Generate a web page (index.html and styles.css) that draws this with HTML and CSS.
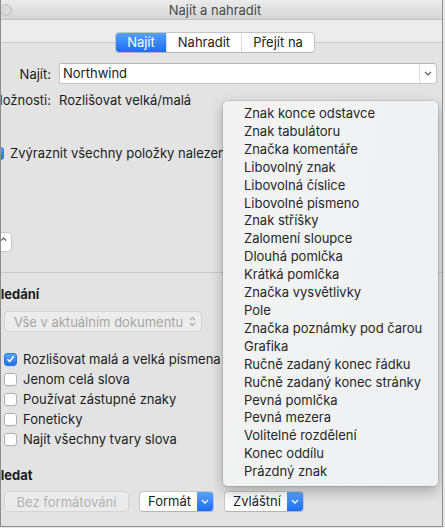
FILE: index.html
```html
<!DOCTYPE html>
<html lang="cs">

<head>
    <meta charset="UTF-8">
    <meta name="viewport" content="width=device-width, initial-scale=1.0">
    <title>Najít a nahradit</title>
    <link rel="stylesheet" href="styles.css">
</head>

<body>
    <div class="window">
        <div class="dialog">
            <div class="titlebar">
                <span class="traffic"><span class="close-btn"></span></span>
                <span class="title">Najít a nahradit</span>
                <span></span>
            </div>

            <div class="toolbar">
                <div class="segmented">
                    <span class="seg active">Najít</span>
                    <span class="seg">Nahradit</span>
                    <span class="seg">Přejít na</span>
                </div>
            </div>

            <div class="content">
                <div class="field-row">
                    <span class="row-label">Najít:</span>
                    <div class="combo">
                        <span class="combo-text">Northwind</span>
                        <span class="combo-arrow">
                            <svg width="8" height="5" viewBox="0 0 8 5"><path d="M1 1l3 3 3-3" fill="none" stroke="#606060" stroke-width="1.2"/></svg>
                        </span>
                    </div>
                </div>

                <div class="options-row">
                    <span class="row-label">Možnosti:</span>
                    <span class="row-value">Rozlišovat velká/malá</span>
                </div>

                <div class="check highlight">
                    <span class="box checked">
                        <svg width="9" height="8" viewBox="0 0 9 8"><path d="M1.5 4.2l2.2 2.3 4-5.2" fill="none" stroke="#fff" stroke-width="1.6"/></svg>
                    </span>
                    Zvýraznit všechny položky nalezené v:
                </div>

                <button class="collapse">
                    <svg width="7" height="4" viewBox="0 0 7 4"><path d="M1 3.5l2.5-2.5 2.5 2.5" fill="none" stroke="#555" stroke-width="1.1"/></svg>
                </button>

                <div class="divider"></div>

                <div class="section-title">Hledání</div>
                <div class="indent">
                    <div class="select disabled">
                        <span>Vše v aktuálním dokumentu</span>
                        <svg width="7" height="11" viewBox="0 0 7 11"><path d="M1 4l2.5-2.5L6 4M1 7l2.5 2.5L6 7" fill="none" stroke="#a8a8a8" stroke-width="1.1"/></svg>
                    </div>

                    <div class="checks">
                        <div class="check">
                            <span class="box checked">
                                <svg width="9" height="8" viewBox="0 0 9 8"><path d="M1.5 4.2l2.2 2.3 4-5.2" fill="none" stroke="#fff" stroke-width="1.6"/></svg>
                            </span>
                            Rozlišovat malá a velká písmena
                        </div>
                        <div class="check"><span class="box"></span>Jenom celá slova</div>
                        <div class="check"><span class="box"></span>Používat zástupné znaky</div>
                        <div class="check"><span class="box"></span>Foneticky</div>
                        <div class="check"><span class="box"></span>Najít všechny tvary slova</div>
                    </div>
                </div>

                <div class="section-title find-title">Hledat</div>
                <div class="indent buttons">
                    <button class="btn disabled">Bez formátování</button>
                    <button class="btn popup">
                        <span class="btn-text">Formát</span>
                        <span class="btn-arrow">
                            <svg width="8" height="5" viewBox="0 0 8 5"><path d="M1 1l3 3 3-3" fill="none" stroke="#fff" stroke-width="1.3"/></svg>
                        </span>
                    </button>
                    <button class="btn popup">
                        <span class="btn-text">Zvláštní</span>
                        <span class="btn-arrow">
                            <svg width="8" height="5" viewBox="0 0 8 5"><path d="M1 1l3 3 3-3" fill="none" stroke="#fff" stroke-width="1.3"/></svg>
                        </span>
                    </button>
                </div>
            </div>
        </div>

        <!-- menu of the "Zvláštní" button -->
        <ul class="menu">
            <li>Znak konce odstavce</li>
            <li>Znak tabulátoru</li>
            <li>Značka komentáře</li>
            <li>Libovolný znak</li>
            <li>Libovolná číslice</li>
            <li>Libovolné písmeno</li>
            <li>Znak stříšky</li>
            <li>Zalomení sloupce</li>
            <li>Dlouhá pomlčka</li>
            <li>Krátká pomlčka</li>
            <li>Značka vysvětlivky</li>
            <li>Pole</li>
            <li>Značka poznámky pod čarou</li>
            <li>Grafika</li>
            <li>Ručně zadaný konec řádku</li>
            <li>Ručně zadaný konec stránky</li>
            <li>Pevná pomlčka</li>
            <li>Pevná mezera</li>
            <li>Volitelné rozdělení</li>
            <li>Konec oddílu</li>
            <li>Prázdný znak</li>
        </ul>
    </div>
</body>

</html>
```

FILE: styles.css
```css
* {
    box-sizing: border-box;
}

body {
    margin: 0;
    background: #e8e8e8;
    font-family: "Inter", "Noto Sans", sans-serif;
    font-size: 13px;
    color: #1c1c1c;
}

.window {
    position: relative;
    width: 443px;
    height: 527px;
    border: 1px solid #8e8e8e;
    border-top: none;
    background: #e3e3e3;
    overflow: hidden;
}

.dialog {
    margin-left: -13px;
    width: 454px;
}

/* title bar */
.titlebar {
    height: 20px;
    display: grid;
    grid-template-columns: 1fr auto 1fr;
    align-items: center;
    background: linear-gradient(#ebebeb, #d6d6d6);
    border-bottom: 1px solid #c0c0c0;
    color: #4a4a4a;
}

.traffic {
    display: flex;
    padding-left: 12px;
}

.close-btn {
    width: 12px;
    height: 12px;
    border-radius: 50%;
    background: #dadada;
    border: 1px solid #bdbdbd;
}

/* tabs */
.toolbar {
    display: flex;
    justify-content: center;
    padding: 12px 0 10px;
    background: linear-gradient(#ececec 0 22px, #c9c9c9 22px 23px, #e3e3e3 23px);
}

.segmented {
    position: relative;
    display: flex;
    height: 21px;
    background: #fff;
    border: 1px solid #c4c4c4;
    border-bottom-color: #b4b4b4;
    border-radius: 4px;
    overflow: hidden;
}

.seg {
    padding: 0 11px;
    line-height: 19px;
    border-left: 1px solid #dadada;
}

.seg:first-child {
    border-left: none;
}

.seg.active {
    background: linear-gradient(#55a0fb, #1a6ef3);
    color: #fff;
}

/* form */
.content {
    padding: 0 5px 0 3px;
}

.field-row {
    display: flex;
    align-items: center;
    gap: 8px;
    height: 21px;
}

.row-label {
    display: flex;
    justify-content: flex-end;
    flex: none;
    width: 60px;
    white-space: nowrap;
}

.combo {
    flex: 1;
    display: flex;
    height: 21px;
    background: #fff;
    border: 1px solid #c6c6c6;
    border-top-color: #b6b6b6;
    border-radius: 1px 4px 4px 1px;
}

.combo-text {
    flex: 1;
    padding-left: 3px;
    line-height: 19px;
}

.combo-arrow {
    display: flex;
    align-items: center;
    justify-content: center;
    width: 17px;
    border-left: 1px solid #e0e0e0;
}

.options-row {
    display: flex;
    gap: 8px;
    margin-top: 8px;
    line-height: 16px;
}

.check {
    display: flex;
    align-items: center;
    gap: 6px;
    height: 20px;
    white-space: nowrap;
}

.check.highlight {
    margin-top: 35px;
}

.box {
    display: flex;
    align-items: center;
    justify-content: center;
    flex: none;
    width: 13px;
    height: 13px;
    background: #fff;
    border: 1px solid #b2b2b2;
    border-radius: 3px;
    box-shadow: 0 1px 0 rgba(0, 0, 0, 0.04);
}

.box.checked {
    background: linear-gradient(#5aa4fc, #1b70f3);
    border-color: #2c78e6;
}

.collapse {
    display: flex;
    align-items: center;
    justify-content: center;
    width: 17px;
    height: 20px;
    margin: 69px 0 0 4px;
    padding: 0 0 6px;
    background: #fff;
    border: 1px solid #c6c6c6;
    border-radius: 4px;
}

.divider {
    height: 1px;
    margin: 20px -5px 0 -3px;
    background: #c7c7c7;
}

.section-title {
    margin-top: 13px;
    line-height: 16px;
    font-weight: 700;
}

.section-title.find-title {
    margin-top: 18px;
}

.indent {
    padding-left: 13px;
}

.select {
    display: flex;
    align-items: center;
    justify-content: space-between;
    width: 198px;
    height: 21px;
    margin-top: 9px;
    padding: 0 5px 0 9px;
    background: #ececec;
    border: 1px solid #d3d3d3;
    border-radius: 4px;
}

.select.disabled {
    color: #a6a6a6;
}

.checks {
    margin-top: 17px;
}

.buttons {
    display: flex;
    gap: 10px;
    margin-top: 8px;
}

.btn {
    display: flex;
    align-items: stretch;
    height: 21px;
    padding: 0;
    font: inherit;
    color: #1c1c1c;
    background: #fff;
    border: 1px solid #c6c6c6;
    border-bottom-color: #b4b4b4;
    border-radius: 4px;
    overflow: hidden;
}

.btn.disabled {
    width: 125px;
    justify-content: center;
    align-items: center;
    color: #b2b2b2;
    background: #ebebeb;
    border-color: #d4d4d4;
}

.btn-text {
    padding: 0 6px 0 8px;
    line-height: 19px;
}

.btn-arrow {
    display: flex;
    align-items: center;
    justify-content: center;
    width: 16px;
    background: linear-gradient(#5aa4fc, #1b6ef2);
}

/* popup menu */
.menu {
    position: absolute;
    left: 222px;
    top: 101px;
    width: 215px;
    margin: 0;
    padding: 4px 0 5px;
    list-style: none;
    background: linear-gradient(100deg, #f3f3f3, #eef0f2);
    border-radius: 5px;
    box-shadow: 0 0 0 0.5px rgba(0, 0, 0, 0.18), 0 5px 14px rgba(0, 0, 0, 0.28);
    font-size: 13px;
    color: #262626;
}

.menu li {
    padding-left: 21px;
    line-height: 17.9px;
    white-space: nowrap;
}
```
